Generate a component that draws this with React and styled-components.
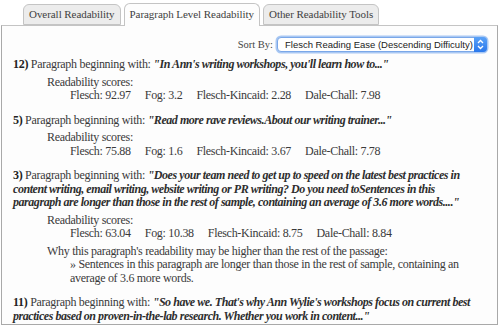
import React from 'react';
import styled, { createGlobalStyle } from 'styled-components';

const GlobalStyle = createGlobalStyle`
  html, body {
    margin: 0;
    padding: 0;
    background: #ffffff;
  }
  body {
    font-family: "Liberation Serif", "Times New Roman", serif;
    color: #3a3a3a;
  }
`;

// each heading keeps the reference's own line breaks
const paragraphs = [
  {
    num: 12,
    lines: ["In Ann's writing workshops, you'll learn how to..."],
    scores: { flesch: '92.97', fog: '3.2', kincaid: '2.28', dale: '7.98' },
  },
  {
    num: 5,
    lines: ['Read more rave reviews.About our writing trainer...'],
    scores: { flesch: '75.88', fog: '1.6', kincaid: '3.67', dale: '7.78' },
  },
  {
    num: 3,
    lines: [
      'Does your team need to get up to speed on the latest best practices in',
      'content writing, email writing, website writing or PR writing? Do you need toSentences in this',
      'paragraph are longer than those in the rest of sample, containing an average of 3.6 more words....',
    ],
    scores: { flesch: '63.04', fog: '10.38', kincaid: '8.75', dale: '8.84' },
    reasons: [
      [
        'Sentences in this paragraph are longer than those in the rest of sample, containing an',
        'average of 3.6 more words.',
      ],
    ],
  },
  {
    num: 11,
    lines: [
      "So have we. That's why Ann Wylie's workshops focus on current best",
      'practices based on proven-in-the-lab research. Whether you work in content...',
    ],
  },
];

const tabs = ['Overall Readability', 'Paragraph Level Readability', 'Other Readability Tools'];

const withBreaks = (lines) =>
  lines.map((line, i) => (
    <React.Fragment key={i}>
      {i > 0 && <br />}
      {line}
    </React.Fragment>
  ));

const App = () => (
  <>
    <GlobalStyle />
    <Wrapper>
      <TabBar>
        {tabs.map((t, i) => (
          <Tab key={t} active={i === 1}>
            {t}
          </Tab>
        ))}
      </TabBar>
      <Panel>
        <SortRow>
          <SortLabel>Sort By:</SortLabel>
          <SelectBox>
            <span>Flesch Reading Ease (Descending Difficulty)</span>
            <Stepper>
              <svg width="7" height="11" viewBox="0 0 7 11">
                <path d="M1 4 L3.5 1.5 L6 4" fill="none" stroke="#fff" strokeWidth="1.3" />
                <path d="M1 7 L3.5 9.5 L6 7" fill="none" stroke="#fff" strokeWidth="1.3" />
              </svg>
            </Stepper>
          </SelectBox>
        </SortRow>
        {paragraphs.map((p) => (
          <Item key={p.num}>
            <Heading>
              <Num>{p.num})</Num> Paragraph beginning with:{' '}
              <Quote>
                {withBreaks(['"' + p.lines[0], ...p.lines.slice(1)])}"
              </Quote>
            </Heading>
            {p.scores && (
              <Section>
                <div>Readability scores:</div>
                <Scores>
                  <span>Flesch: {p.scores.flesch}</span>
                  <span>Fog: {p.scores.fog}</span>
                  <span>Flesch-Kincaid: {p.scores.kincaid}</span>
                  <span>Dale-Chall: {p.scores.dale}</span>
                </Scores>
              </Section>
            )}
            {p.reasons && (
              <Section>
                <div>Why this paragraph's readability may be higher than the rest of the passage:</div>
                {p.reasons.map((r, i) => (
                  <Reason key={i}>
                    » {withBreaks(r)}
                  </Reason>
                ))}
              </Section>
            )}
          </Item>
        ))}
      </Panel>
    </Wrapper>
  </>
);

export default App;

const Wrapper = styled.div`
  width: 500px;
  height: 326px;
  overflow: hidden;
  font-size: 12px;
  line-height: 13.5px;
  letter-spacing: -0.3px;
`;

const TabBar = styled.div`
  display: flex;
  align-items: flex-end;
  gap: 3px;
  padding: 3px 0 0 23px;
  height: 22px;
`;

const Tab = styled.div`
  height: ${(props) => (props.active ? '23px' : '21px')};
  margin-bottom: ${(props) => (props.active ? '-1px' : '0')};
  padding: 0 5px;
  display: flex;
  align-items: center;
  border: 1px solid #c4c4c4;
  border-bottom: ${(props) => (props.active ? 'none' : '1px solid #c4c4c4')};
  border-radius: 6px 6px 0 0;
  background: ${(props) => (props.active ? '#fdfdfd' : '#ececec')};
  color: #3f3f3f;
  font-size: 11px;
  letter-spacing: -0.05px;
  white-space: nowrap;
  box-sizing: border-box;
`;

const Panel = styled.div`
  margin: 0 2px 0 1px;
  height: 300px;
  box-sizing: border-box;
  border: 1px solid #a9a9a9;
  border-top-color: #c4c4c4;
  background: #fdfdfd;
  padding: 11px 10px 0 11px;
  overflow: hidden;
`;

const SortRow = styled.div`
  display: flex;
  justify-content: flex-end;
  align-items: center;
  gap: 4px;
  margin-bottom: 6px;
`;

const SortLabel = styled.span`
  font-size: 10.5px;
  letter-spacing: 0;
  color: #444;
`;

const SelectBox = styled.div`
  position: relative;
  width: 210px;
  height: 15px;
  box-sizing: border-box;
  border: 1px solid #7aa7e8;
  box-shadow: 0 0 0 1.5px #a9c8f3;
  border-radius: 4px;
  background: #fff;
  font-family: "Liberation Sans", Arial, sans-serif;
  font-size: 9.5px;
  letter-spacing: 0;
  color: #222;
  display: flex;
  align-items: center;
  padding-left: 7px;
`;

const Stepper = styled.span`
  position: absolute;
  right: -1px;
  top: -1px;
  width: 13px;
  height: 15px;
  border-radius: 0 4px 4px 0;
  background: linear-gradient(#5aa2f7, #2a78ec);
  display: flex;
  align-items: center;
  justify-content: center;
`;

const Item = styled.div`
  margin-bottom: 11px;
`;

const Heading = styled.div`
  color: #3a3a3a;
  white-space: nowrap;
`;

const Num = styled.b`
  color: #222;
`;

const Quote = styled.i`
  font-weight: bold;
  letter-spacing: -0.45px;
  color: #2e2e2e;
`;

const Section = styled.div`
  margin: 4px 0 0 34px;
`;

const Scores = styled.div`
  display: flex;
  gap: 14px;
  padding-left: 23px;
`;

const Reason = styled.div`
  padding-left: 23px;
  white-space: nowrap;
`;
